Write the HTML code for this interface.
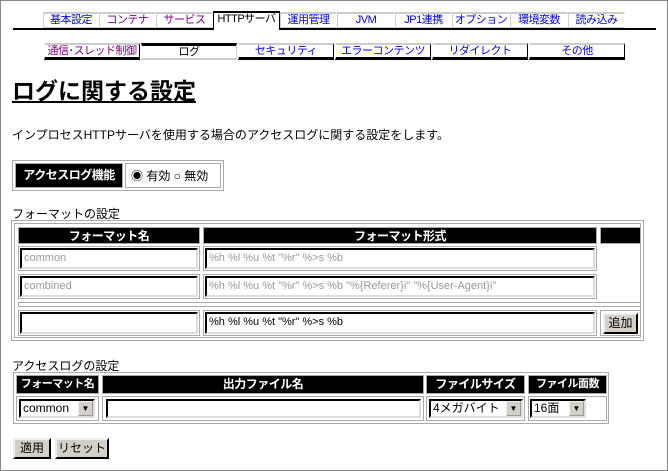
<!DOCTYPE html>
<html><head><meta charset="utf-8"><style>
*{box-sizing:border-box;margin:0;padding:0}
body{width:668px;height:471px;background:#fff;font-family:"Liberation Sans","Noto Sans CJK JP",sans-serif;font-size:12px;position:relative;overflow:hidden}
.frame{position:absolute;left:0;top:0;width:668px;height:471px;border:1px solid #888}
.a{position:absolute;white-space:nowrap}
.t1{position:absolute;top:12px;height:16px;border:1px solid #ccc;border-top:2px solid #ccc;border-right:1px solid #fff;text-align:center;line-height:13px;color:#00f;font-size:11px;letter-spacing:-0.5px;background:#fff;white-space:nowrap;overflow:hidden}
.t1.v{color:#800080}
.t1.s{border:1px solid #000;border-top:2px solid #000;border-bottom:none;color:#000;height:17px;top:11px}
.t2{position:absolute;top:43px;height:17px;border-top:2px solid #ccc;border-bottom:3px solid #000;border-left:1px solid #fff;border-right:1px solid #000;text-align:center;line-height:12px;color:#00f;font-size:11px;letter-spacing:-0.5px;white-space:nowrap;overflow:hidden}
.t2.s{border-top:3px solid #000;border-bottom:2px solid #ccc;border-right:1px solid #ccc;color:#000}
.hd{position:absolute;background:#000;color:#fff;font-weight:bold;text-align:center;line-height:16px;font-size:12px;border:1px solid #aaa;white-space:nowrap;overflow:hidden;letter-spacing:-0.5px}
.in{position:absolute;border:2px inset #aaa;border-top-color:#555;border-left-color:#555;border-right-color:#ddd;border-bottom-color:#ddd;background:#fff;font-family:"Liberation Sans","Noto Sans CJK JP",sans-serif;font-size:11px;line-height:17px;padding-left:2px;color:#999;white-space:nowrap;overflow:hidden}
.box{position:absolute;border:1px solid #aaa}
.btn{position:absolute;background:#d4d0c8;border:2px outset #eee;border-right-color:#555;border-bottom-color:#555;text-align:center;line-height:16px;font-size:12px;white-space:nowrap}
.sel{position:absolute;border:2px inset #888;border-top-color:#555;border-left-color:#555;border-right-color:#ddd;border-bottom-color:#ddd;background:#fff;font-size:12px;line-height:15px;padding-left:2px;white-space:nowrap}
.sel i{position:absolute;right:0;top:0;width:15px;height:15px;background:#d4d0c8;border:1px outset #eee;font-style:normal;font-size:8px;text-align:center;line-height:13px}
</style></head><body>
<div class="frame"></div>
<div class="t1" style="left:43px;width:56px">基本設定</div>
<div class="t1 v" style="left:99px;width:57px">コンテナ</div>
<div class="t1 v" style="left:156px;width:57px">サービス</div>
<div class="t1 s" style="left:213px;width:67px">HTTPサーバ</div>
<div class="t1" style="left:280px;width:57px">運用管理</div>
<div class="t1" style="left:337px;width:58px">JVM</div>
<div class="t1" style="left:395px;width:57px">JP1連携</div>
<div class="t1" style="left:452px;width:58px">オプション</div>
<div class="t1" style="left:510px;width:58px">環境変数</div>
<div class="t1" style="left:568px;width:57px">読み込み</div>
<div class="a" style="left:13px;top:28px;width:643px;height:2px;background:#000"></div>
<div class="a" style="left:214px;top:28px;width:65px;height:2px;background:#fff"></div>

<div class="t2" style="left:44px;width:96px;color:#800080">通信･スレッド制御</div>
<div class="t2 s" style="left:141px;width:96px">ログ</div>
<div class="t2" style="left:238px;width:96px">セキュリティ</div>
<div class="t2" style="left:335px;width:96px">エラーコンテンツ</div>
<div class="t2" style="left:432px;width:96px">リダイレクト</div>
<div class="t2" style="left:529px;width:96px">その他</div>

<div class="a" style="left:12px;top:76px;font-size:23px;font-weight:bold;text-decoration:underline;line-height:30px">ログに関する設定</div>
<div class="a" style="left:12px;top:126px">インプロセスHTTPサーバを使用する場合のアクセスログに関する設定をします。</div>

<div class="box" style="left:12px;top:160px;width:212px;height:31px"></div>
<div class="hd" style="left:15px;top:163px;width:108px;height:25px;line-height:23px">アクセスログ機能</div>
<div class="box" style="left:125px;top:163px;width:96px;height:25px"></div>
<div class="a" style="left:131px;top:169px;line-height:14px">◉ 有効 ○ 無効</div>

<div class="a" style="left:12px;top:205px">フォーマットの設定</div>
<div class="box" style="left:11px;top:220px;width:633px;height:121px"></div>
<div class="box" style="left:14px;top:223px;width:627px;height:115px"></div>
<div class="hd" style="left:18px;top:227px;width:182px;height:17px">フォーマット名</div>
<div class="hd" style="left:203px;top:227px;width:394px;height:17px">フォーマット形式</div>
<div class="hd" style="left:600px;top:227px;width:41px;height:17px"></div>
<div class="box" style="left:18px;top:246px;width:182px;height:25px"></div>
<div class="box" style="left:203px;top:246px;width:394px;height:25px"></div>
<div class="in" style="left:20px;top:248px;width:178px;height:21px">common</div>
<div class="in" style="left:205px;top:248px;width:390px;height:21px">%h %l %u %t "%r" %&gt;s %b</div>
<div class="box" style="left:18px;top:274px;width:182px;height:25px"></div>
<div class="box" style="left:203px;top:274px;width:394px;height:25px"></div>
<div class="in" style="left:20px;top:276px;width:178px;height:21px">combined</div>
<div class="in" style="left:205px;top:276px;width:390px;height:21px">%h %l %u %t "%r" %&gt;s %b "%{Referer}i" "%{User-Agent}i"</div>
<div class="box" style="left:18px;top:302px;width:623px;height:5px"></div>
<div class="box" style="left:18px;top:310px;width:182px;height:26px"></div>
<div class="box" style="left:203px;top:310px;width:394px;height:26px"></div>
<div class="box" style="left:600px;top:310px;width:41px;height:26px"></div>
<div class="in" style="left:20px;top:312px;width:178px;height:22px"></div>
<div class="in" style="left:205px;top:312px;width:390px;height:22px;color:#000">%h %l %u %t "%r" %&gt;s %b</div>
<div class="btn" style="left:603px;top:313px;width:35px;height:21px">追加</div>

<div class="a" style="left:12px;top:357px">アクセスログの設定</div>
<div class="box" style="left:13px;top:372px;width:596px;height:52px"></div>
<div class="hd" style="left:16px;top:375px;width:83px;height:19px;font-size:11px">フォーマット名</div>
<div class="hd" style="left:102px;top:375px;width:322px;height:19px">出力ファイル名</div>
<div class="hd" style="left:426px;top:375px;width:99px;height:19px">ファイルサイズ</div>
<div class="hd" style="left:528px;top:375px;width:79px;height:19px;font-size:11px">ファイル面数</div>
<div class="box" style="left:16px;top:396px;width:83px;height:25px"></div>
<div class="box" style="left:102px;top:396px;width:322px;height:25px"></div>
<div class="box" style="left:426px;top:396px;width:99px;height:25px"></div>
<div class="box" style="left:528px;top:396px;width:79px;height:25px"></div>
<div class="sel" style="left:19px;top:399px;width:76px;height:19px">common<i>▼</i></div>
<div class="in" style="left:106px;top:399px;width:315px;height:19px"></div>
<div class="sel" style="left:429px;top:399px;width:94px;height:19px">4メガバイト<i>▼</i></div>
<div class="sel" style="left:530px;top:399px;width:56px;height:19px">16面<i>▼</i></div>

<div class="btn" style="left:13px;top:438px;width:38px;height:21px">適用</div>
<div class="btn" style="left:55px;top:438px;width:54px;height:21px">リセット</div>
</body></html>
